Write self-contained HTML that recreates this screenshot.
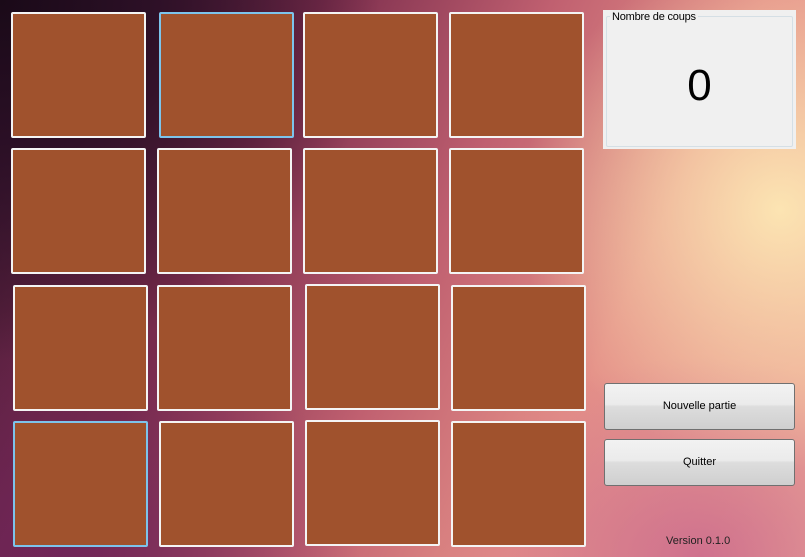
<!DOCTYPE html>
<html><head><style>
body{margin:0;width:805px;height:557px;overflow:hidden;position:relative;font-family:"Liberation Sans",sans-serif;
background:
radial-gradient(ellipse 260px 260px at 780px 210px, rgba(253,232,180,0.95), rgba(253,232,180,0) 100%),
radial-gradient(ellipse 380px 360px at 0px 0px, #1a0a18 0%, rgba(40,14,36,0.9) 40%, rgba(40,14,36,0) 100%),
radial-gradient(ellipse 300px 250px at 60px 557px, rgba(110,36,90,0.85), rgba(110,36,90,0) 100%),
radial-gradient(ellipse 260px 200px at 700px 557px, rgba(200,100,140,0.8), rgba(200,100,140,0) 100%),
linear-gradient(115deg,#3a1630 0%,#7a2c4c 30%,#c06070 52%,#e49088 72%,#eeac98 100%);}
.c{position:absolute;width:131px;height:122px;background:#a0522d;border:2px solid #f4f4f4;border-radius:2px;box-sizing:content-box}
.b{border-color:#7cc4ec}
.g{position:absolute;left:603px;top:10px;width:193px;height:139px;background:#f0f0f0}
.g .f{position:absolute;left:3px;top:6px;right:3px;bottom:2px;border:1px solid #d5dfe5;border-radius:2px}
.g .l{position:absolute;left:7px;top:1px;background:#f0f0f0;padding:0 2px;font-size:11px;color:#000;letter-spacing:-0.2px}
.g .n{position:absolute;left:0;right:0;top:52px;text-align:center;font-size:44px;line-height:48px;color:#000}
.btn{position:absolute;left:604px;width:189px;height:45px;border:1px solid #707070;border-radius:3px;
background:linear-gradient(#f2f2f2 0%,#ebebeb 45%,#dddddd 50%,#cfcfcf 100%);font-size:11px;text-align:center;line-height:45px;color:#000}
.v{position:absolute;left:666px;top:535px;font-size:11px;color:#222}
</style></head><body>
<div class="c" style="left:11px;top:12px"></div>
<div class="c b" style="left:159px;top:12px"></div>
<div class="c" style="left:303px;top:12px"></div>
<div class="c" style="left:449px;top:12px"></div>
<div class="c" style="left:11px;top:148px"></div>
<div class="c" style="left:157px;top:148px"></div>
<div class="c" style="left:303px;top:148px"></div>
<div class="c" style="left:449px;top:148px"></div>
<div class="c" style="left:13px;top:285px"></div>
<div class="c" style="left:157px;top:285px"></div>
<div class="c" style="left:305px;top:284px"></div>
<div class="c" style="left:451px;top:285px"></div>
<div class="c b" style="left:13px;top:421px"></div>
<div class="c" style="left:159px;top:421px"></div>
<div class="c" style="left:305px;top:420px"></div>
<div class="c" style="left:451px;top:421px"></div>
<div class="g"><div class="f"></div><div class="l">Nombre de coups</div><div class="n">0</div></div>
<div class="btn" style="top:383px">Nouvelle partie</div>
<div class="btn" style="top:439px">Quitter</div>
<div class="v">Version 0.1.0</div>
</body></html>
